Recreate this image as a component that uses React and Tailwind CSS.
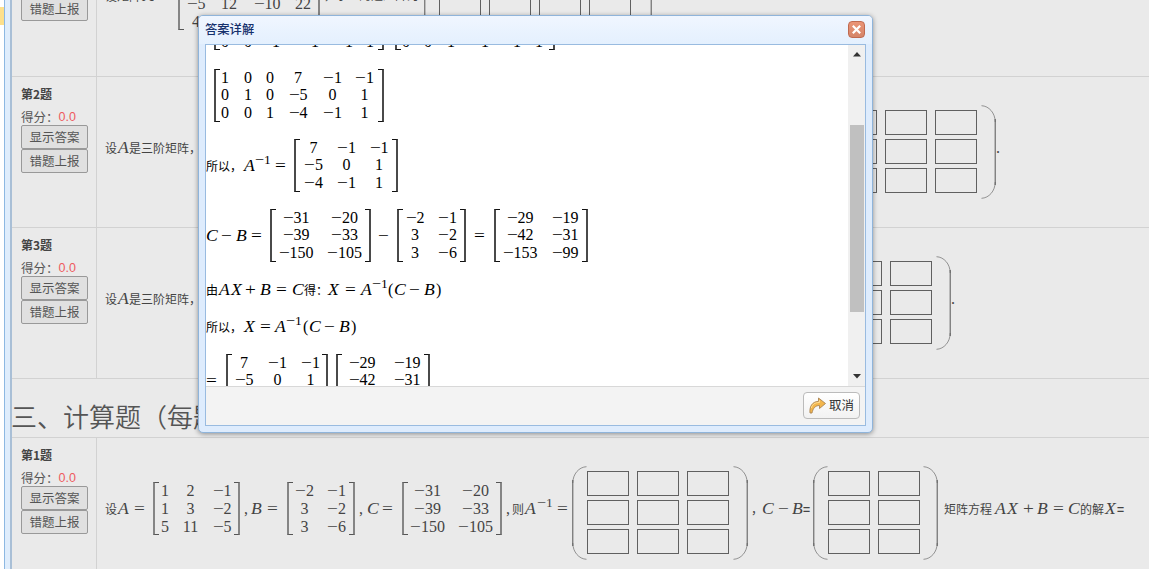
const cx = (...a) => a.filter(Boolean).join(' ');

/* Maths: italic letters, upright digits and wide operators */
function Tex({ children, size = 'text-[16px]', className = '' }) {
  const parts = String(children).split(/([A-Z]|[−+=])/).filter(Boolean);
  return (
    <span className={cx('inline-flex items-center whitespace-nowrap font-["Liberation_Serif",serif] leading-[16px]', size, className)}>
      {parts.map((p, i) =>
        /[A-Z]/.test(p) ? (
          <i key={i} className="inline-block w-[12px] origin-left scale-x-110">{p}</i>
        ) : /[−+=]/.test(p) ? (
          <span key={i} className="inline-block w-[11px] origin-left scale-x-120">{p}</span>
        ) : (
          <span key={i}>{p}</span>
        )
      )}
    </span>
  );
}

function Sup({ children }) {
  return (
    <span className="mb-[12px] inline-flex items-center font-['Liberation_Serif',serif] text-[13.5px] leading-[16px]">
      <span className="inline-block w-[9px] origin-left scale-x-120">−</span>
      {children}
    </span>
  );
}

function At({ w, zh, sup, children }) {
  return (
    <span className={cx('flex shrink-0 items-center whitespace-nowrap', w)}>
      {zh ? <span className="text-[12px] leading-[16px]">{children}</span> : sup ? <Sup>1</Sup> : <Tex>{children}</Tex>}
    </span>
  );
}

function Matrix({ cols, rows, gap, bold, pad }) {
  const line = bold ? 'border-y-[#111] border-x-[#4a4a4a]' : 'border-y-[#555] border-x-[#858585]';
  return (
    <span className={cx('flex h-[53px] shrink-0 items-stretch', gap)}>
      <span className={cx('-mr-1 w-[6px] shrink-0 border-y border-l-2', line)} />
      <span className={cx('grid grid-rows-3 items-center justify-items-center', pad || (bold ? 'mb-0' : '-mb-px'), cols)}>
        {rows.flat().map((v, i) => <Tex key={i}>{v}</Tex>)}
      </span>
      <span className={cx('-ml-1 w-[6px] shrink-0 border-y border-r-2', line)} />
    </span>
  );
}

function Paren({ right }) {
  return (
    <svg width="15" height="94" viewBox="0 0 15 94" className={cx('mt-[2px] shrink-0', right && '-scale-x-100')} fill="none" stroke="#555">
      <path d="M14.5 .7C7 1 .8 8 .8 17" strokeWidth=".6" />
      <path d="M.8 14V80" strokeWidth="1" />
      <path d="M14.5 93.3C7 93 .8 86 .8 77" strokeWidth=".6" />
    </svg>
  );
}

function Blanks({ n, gap, cols, end = 'w-[5px]' }) {
  return (
    <span className={cx('flex shrink-0 items-center', gap)}>
      <Paren />
      <span className={cx('grid gap-x-[8px] gap-y-[4px]', cols)}>
        {Array.from({ length: n * 3 }, (_, i) => (
          <span key={i} className="h-[25px] w-[42px] border border-[#606060]" />
        ))}
      </span>
      <span className={cx('shrink-0', end)} />
      <Paren right />
    </span>
  );
}

function Btn({ children }) {
  return (
    <button className="block h-[24px] w-[67px] rounded-[2px] border border-[#999] bg-[#e0e0e0] text-center text-[12.5px] leading-[20px] text-[#555]">
      {children}
    </button>
  );
}

function Side({ title }) {
  return (
    <div className="w-[85px] shrink-0 border-r border-[#d2d2d2] pl-[9px] pt-[8px] text-[12px]">
      <div className="h-[18px] font-bold leading-[18px] text-[#444]">{title}</div>
      <div className="mt-[5px] flex h-[17px] items-center text-[12.5px] leading-[16px] text-[#555]">
        得分：<span className="font-['Liberation_Sans',sans-serif] text-[12.5px] text-[#ee5a5f]">0.0</span>
      </div>
      <Btn>显示答案</Btn>
      <Btn>错题上报</Btn>
    </div>
  );
}

function Row({ title, children }) {
  return (
    <div className="flex h-[151px] shrink-0 border-t border-[#d2d2d2]">
      <Side title={title} />
      <div className="flex h-[148px] items-center pl-[8px] text-[#444]">{children}</div>
    </div>
  );
}

function Text({ children }) {
  return <span className="mb-[7px] flex shrink-0 items-center">{children}</span>;
}

function Dialog() {
  return (
    <div className="absolute left-[198px] top-[15px] flex h-[418px] w-[675px] flex-col rounded-[5px] border border-[#8fb4da] bg-[#deecfd] px-[6px] pb-[6px] shadow-[0_1px_5px_rgba(0,0,0,0.4)]">
      <div className="-mx-[6px] flex h-[28px] shrink-0 items-center justify-between rounded-t-[4px] bg-linear-to-b from-[#f0f6ff] to-[#e4f0fe] pl-[6px] pr-[7px]">
        <span className="mb-[2px] text-[12.3px] font-medium text-[#15306c]">答案详解</span>
        <button className="mb-[2px] flex size-[17px] items-center justify-center rounded-[4px] border border-[#c06a50] bg-linear-to-b from-[#ea9476] to-[#d5866a]">
          <svg width="9" height="9" viewBox="0 0 9 9" stroke="#fff" strokeWidth="2.2"><path d="M.8 .8 8.2 8.2M8.2 .8 .8 8.2" /></svg>
        </button>
      </div>
      <div className="flex min-h-0 grow flex-col border border-[#99bbe0] bg-[#f3f3f3]">
        <div className="flex h-[341px] shrink-0 bg-white">
          <div className="h-[341px] w-[642px] overflow-hidden text-black">
            <div className="-mt-[48px] flex h-[53px] pl-[8px]">
              <Matrix bold pad="-mb-[1px]" cols="grid-cols-[18px_28px_28px_50px_18px_24px]" rows={[['', '', '', '', '', ''], ['', '', '', '', '', ''], ['0', '0', '1', '1', '1', '1']]} />
              <Matrix bold pad="-mb-[1px]" gap="ml-[11px]" cols="grid-cols-[18px_26px_20px_48px_16px_28px]" rows={[['', '', '', '', '', ''], ['', '', '', '', '', ''], ['0', '0', '1', '1', '1', '1']]} />
            </div>
            <div className="mt-[19px] flex h-[53px] pl-[8px]">
              <Matrix bold cols="grid-cols-[18px_28px_16px_40px_29px_35px]" rows={[['1', '0', '0', '7', '−1', '−1'], ['0', '1', '0', '−5', '0', '1'], ['0', '0', '1', '−4', '−1', '1']]} />
            </div>
            <div className="mt-[17px] flex h-[53px] items-center">
              <At zh w="w-[38px]">所以，</At>
              <At w="w-[11px]">A</At><At sup w="w-[20px]" /><At w="w-[19px]">=</At>
              <Matrix bold cols="grid-cols-[35px_31px_34px]" rows={[['7', '−1', '−1'], ['−5', '0', '1'], ['−4', '−1', '1']]} />
            </div>
            <div className="mt-[17px] flex h-[53px] items-center">
              <At w="w-[15px]">C</At><At w="w-[15px]">−</At><At w="w-[15px]">B</At><At w="w-[19px]">=</At>
              <Matrix bold cols="grid-cols-[48px_49px]" rows={[['−31', '−20'], ['−39', '−33'], ['−150', '−105']]} />
              <At w="ml-[7px] w-[19px]">−</At>
              <Matrix bold cols="grid-cols-[32px_33px]" rows={[['−2', '−1'], ['3', '−2'], ['3', '−6']]} />
              <At w="ml-[8px] w-[20px]">=</At>
              <Matrix bold cols="grid-cols-[48px_42px]" rows={[['−29', '−19'], ['−42', '−31'], ['−153', '−99']]} />
            </div>
            <div className="mt-[18px] flex h-[20px] items-center">
              <At zh w="w-[13px]">由</At><At w="w-[26px]">AX</At><At w="w-[15px]">+</At><At w="w-[16px]">B</At><At w="w-[16px]">=</At><At w="w-[12px]">C</At>
              <At zh w="w-[24px]">得：</At>
              <At w="w-[17px]">X</At><At w="w-[16px]">=</At><At w="w-[11px]">A</At><At sup w="w-[16px]" /><At w="w-[6px]">(</At><At w="w-[15px]">C</At><At w="w-[15px]">−</At><At w="w-[12px]">B</At><At w="w-[6px]">)</At>
            </div>
            <div className="mt-[17px] flex h-[20px] items-center">
              <At zh w="w-[38px]">所以，</At>
              <At w="w-[16px]">X</At><At w="w-[15px]">=</At><At w="w-[11px]">A</At><At sup w="w-[17px]" /><At w="w-[6px]">(</At><At w="w-[15px]">C</At><At w="w-[15px]">−</At><At w="w-[12px]">B</At><At w="w-[6px]">)</At>
            </div>
            <div className="mt-[17px] flex h-[53px] items-center">
              <At w="w-[20px]">=</At>
              <Matrix bold cols="grid-cols-[32px_35px_31px]" rows={[['7', '−1', '−1'], ['−5', '0', '1'], ['−4', '−1', '1']]} />
              <Matrix bold gap="ml-[8px]" cols="grid-cols-[48px_42px]" rows={[['−29', '−19'], ['−42', '−31'], ['−153', '−99']]} />
            </div>
          </div>
          <div className="flex w-[17px] shrink-0 flex-col items-center bg-[#f0f0f0]">
            <svg width="8" height="5" viewBox="0 0 8 5" className="mt-[7px] shrink-0"><path d="M4 0 8 4.5H0Z" fill="#333" /></svg>
            <div className="mt-[68px] h-[187px] w-[14px] shrink-0 bg-[#c0c0c0]" />
            <svg width="8" height="5" viewBox="0 0 8 5" className="mt-[62px] shrink-0"><path d="M4 4.5 8 0H0Z" fill="#333" /></svg>
          </div>
        </div>
        <div className="flex grow items-center justify-end border-t border-[#d8d8d8] pr-[5px]">
          <button className="mb-px flex h-[27px] w-[57px] items-center rounded-[4px] border border-[#bbb] bg-linear-to-b from-white to-[#f2f2f2] pl-[5px] text-[12.5px] text-[#333]">
            <svg width="17" height="17" viewBox="0 0 17 17" className="mr-[3px] shrink-0">
              <path d="M1 16C.3 9 3.5 4.7 9.5 4.3V1L16.5 6.5 10.5 11.5V8.5C6.5 8.5 4 11 3 16Z" fill="#f3b64c" stroke="#a98455" strokeWidth=".9" strokeLinejoin="round" />
              <path d="M2.3 11C3.5 7 6 5.6 10.4 5.5V3.2" fill="none" stroke="#ffe3a0" strokeWidth=".9" />
            </svg>
            取消
          </button>
        </div>
      </div>
    </div>
  );
}

export default function App() {
  return (
    <div className="relative flex h-[569px] w-[1149px] overflow-hidden bg-[#eaeaea] font-['Noto_Sans_CJK_SC',sans-serif]">
      <div className="w-[4px] shrink-0 bg-white pt-[7px]"><div className="h-[18px] bg-[#fde08c]" /></div>
      <div className="w-[8px] shrink-0 border-x border-r-2 border-l-[#8db8e2] border-r-[#a9bfd6] bg-[#dfedfc]" />
      <div className="flex min-w-0 grow flex-col">
        <div className="flex h-[76px] shrink-0 overflow-hidden">
          <div className="w-[85px] shrink-0 border-r border-[#d2d2d2] pl-[9px]"><div className="-mt-[3px]"><Btn>错题上报</Btn></div></div>
          <div className="-mt-[23px] flex h-[53px] items-center pl-[8px] text-[#444]">
            <span className="mb-[15px] flex w-[73px] shrink-0 items-center">
              <At zh w="w-[38px]">设矩阵</At><At w="w-[13px]">A</At><At>=</At>
            </span>
            <Matrix pad="-mb-px" cols="grid-cols-[32px_34px_42px_30px]" rows={[['', '', '', ''], ['−5', '12', '−10', '22'], ['4', '', '', '']]} />
            <span className="mb-[17px] ml-[4px] flex w-[100px] shrink-0 items-center">
              <At zh w="w-[22px]">，求</At><At w="w-[13px]">A</At><At zh>的逆矩阵为</At>
            </span>
            <Blanks n={4} cols="grid-cols-4" end="w-[6px]" />
          </div>
        </div>
        <Row title="第2题">
          <Text><At zh w="w-[13px]">设</At><At w="w-[11px]">A</At><At zh w="w-[691px]">是三阶矩阵，</At></Text>
          <Blanks n={3} cols="grid-cols-3" end="w-[4px]" />
          <At w="mb-[6px] w-[4px]">.</At>
        </Row>
        <Row title="第3题">
          <Text><At zh w="w-[13px]">设</At><At w="w-[11px]">A</At><At zh w="w-[646px]">是三阶矩阵，</At></Text>
          <Blanks n={3} cols="grid-cols-3" end="w-[4px]" />
          <At w="mb-[6px] w-[4px]">.</At>
        </Row>
        <div className="flex h-[59px] shrink-0 items-end border-t border-[#d2d2d2] pb-[2px]">
          <h2 className="-ml-px whitespace-nowrap text-[26px] font-[350] leading-[38px] text-[#555]">三、计算题（每题10分）</h2>
        </div>
        <Row title="第1题">
          <Text>
            <At zh w="w-[13px]">设</At><At w="w-[16px]">A</At><At w="w-[19px]">=</At>
            <Matrix cols="grid-cols-[20px_31px_32px]" rows={[['1', '2', '−1'], ['1', '3', '−2'], ['5', '11', '−5']]} />
            <At w="ml-[4px] w-[7px]">,</At><At w="w-[16px]">B</At><At w="w-[20px]">=</At>
            <Matrix cols="grid-cols-[31px_33px]" rows={[['−2', '−1'], ['3', '−2'], ['3', '−6']]} />
            <At w="ml-[4px] w-[8px]">,</At><At w="w-[15px]">C</At><At w="w-[20px]">=</At>
            <Matrix cols="grid-cols-[47px_49px]" rows={[['−31', '−20'], ['−39', '−33'], ['−150', '−105']]} />
            <At w="ml-[4px] w-[6px]">,</At><At zh w="w-[13px]">则</At><At w="w-[12px]">A</At><At sup w="w-[20px]" /><At w="w-[15px]">=</At>
          </Text>
          <Blanks n={3} cols="grid-cols-3" end="w-[4px]" />
          <Text>
            <At zh w="ml-[3px] w-[11px]">，</At><At w="w-[16px]">C</At><At w="w-[14px]">−</At><At w="w-[11px]">B</At><At zh w="w-[10px] font-bold">=</At>
          </Text>
          <Blanks n={2} cols="grid-cols-2" end="w-[3px]" />
          <Text>
            <At zh w="ml-[6px] w-[51px]">矩阵方程</At><At w="w-[28px]">AX</At><At w="w-[14px]">+</At><At w="w-[16px]">B</At><At w="w-[15px]">=</At><At w="w-[12px]">C</At><At zh w="w-[25px]">的解</At><At w="w-[12px]">X</At><At zh w="font-bold">=</At>
          </Text>
        </Row>
      </div>
      <Dialog />
    </div>
  );
}
